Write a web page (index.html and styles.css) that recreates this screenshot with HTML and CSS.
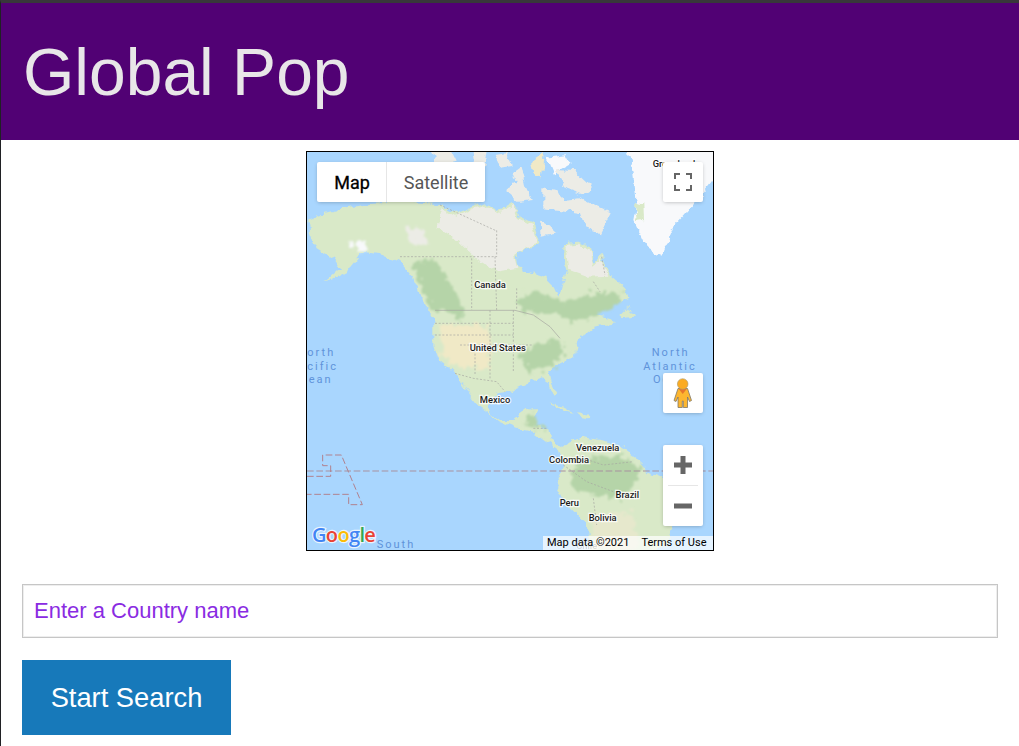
FILE: index.html
```html
<!DOCTYPE html>
<html>

<head>
    <title>Global Pop</title>
    <link rel="stylesheet" href="styles.css">
</head>

<body>
    <header class="banner">
        <h1>Global Pop</h1>
    </header>

    <div class="map">
        <svg class="map-tiles" viewBox="21 21 1218 1194">
            <defs>
                <filter id="coast" filterUnits="userSpaceOnUse" x="-40" y="-40" width="1340" height="1320">
                    <feTurbulence type="fractalNoise" baseFrequency="0.035" numOctaves="3" seed="4" />
                    <feDisplacementMap in="SourceGraphic" scale="26" xChannelSelector="R" yChannelSelector="G" />
                </filter>
                <filter id="patch" filterUnits="userSpaceOnUse" x="-40" y="-40" width="1340" height="1320">
                    <feTurbulence type="fractalNoise" baseFrequency="0.05" numOctaves="3" seed="9" />
                    <feDisplacementMap in="SourceGraphic" scale="46" xChannelSelector="R" yChannelSelector="G" />
                    <feGaussianBlur stdDeviation="3" />
                </filter>
            </defs>

            <rect class="water" x="21" y="21" width="1218" height="1194" />

            <g class="coast">
                <!-- greenland -->
                <path class="ice" d="M980 10 L1000 90 L1010 170 L1000 225 L1040 310 L1085 335 L1120 245 L1180 180 L1250 90 L1250 10 Z" />
                <path class="land" d="M1005 170 L1030 175 L1032 225 L1010 228 Z" />

                <!-- arctic islands -->
                <path class="tundra" d="M395 10 L450 10 L470 50 L430 60 L405 45 Z" />
                <path class="tundra" d="M520 10 L560 10 L552 70 L525 62 Z" />
                <path class="tundra" d="M585 30 L620 25 L638 62 L600 68 Z" />
                <path class="tundra" d="M640 80 L665 62 L678 120 L698 165 L655 170 L612 132 L650 115 Z" />
                <path class="sand" d="M690 55 L735 25 L725 100 L700 95 Z" />
                <path class="ice" d="M740 35 L795 28 L812 58 L762 88 Z" />
                <path class="tundra" d="M730 130 L775 135 L790 165 L840 160 L880 180 L932 205 L900 268 L855 250 L840 205 L780 195 L730 190 Z" />
                <path class="tundra" d="M768 78 L830 82 L880 130 L850 150 L792 130 Z" />
                <path class="tundra" d="M720 225 L745 240 L772 265 L725 275 Z" />
                <path class="tundra" d="M510 110 L555 120 L540 165 L510 150 Z" />

                <!-- north america -->
                <path class="land" d="M25 225 L70 205 L130 190 L200 175 L300 168 L420 178 L470 205 L520 185 L560 175 L600 195 L640 170 L660 215 L700 235 L720 300 L680 310 L650 330 L655 360 L690 385 L740 400 L765 425 L780 460 L790 420 L800 380 L790 340 L790 295 L830 290 L870 310 L880 355 L905 330 L930 390 L975 430 L985 455 L955 470 L905 480 L870 505 L930 520 L945 535 L880 545 L850 570 L830 600 L825 630 L800 645 L745 675 L750 705 L772 745 L760 755 L745 715 L720 700 L680 715 L650 730 L625 740 L590 745 L570 775 L560 785 L570 805 L600 825 L640 825 L690 790 L715 790 L700 845 L745 850 L750 885 L790 910 L810 890 L845 875 L950 895 L1020 945 L1040 980 L1090 1000 L1120 1145 L1100 1195 L1060 1225 L870 1225 L860 1135 L800 1075 L770 1015 L790 965 L780 935 L770 910 L740 890 L700 860 L650 850 L600 830 L560 800 L530 775 L465 685 L420 645 L405 615 L400 600 L400 520 L370 470 L340 400 L300 350 L250 330 L190 320 L150 370 L70 415 L120 370 L100 340 L50 310 L30 260 Z" />
                <path class="tundra" d="M470 212 L520 192 L560 182 L600 200 L640 178 L655 220 L695 240 L712 296 L680 305 L645 330 L655 368 L590 380 L520 335 L480 295 L410 245 L425 188 Z" />
                <path class="tundra" d="M796 300 L830 296 L866 315 L880 362 L905 340 L925 392 L860 395 L805 375 Z" />
                <path class="land" d="M955 510 L985 480 L1005 515 L965 520 Z" />
                <path class="land" d="M465 680 L490 720 L522 770 L495 735 Z" />
                <path class="land" d="M745 775 L790 785 L825 805 L775 790 Z" />
                <path class="land" d="M835 805 L865 810 L860 820 L835 815 Z" />
            </g>

            <!-- soft vegetation patches -->
            <g class="patches">
                <path class="forest" d="M335 355 L400 340 L440 400 L480 470 L490 525 L440 500 L405 495 L380 460 Z" />
                <path class="forest" d="M650 470 L700 435 L790 475 L880 445 L965 440 L950 480 L880 515 L820 535 L780 510 L720 510 L665 495 Z" />
                <path class="forest" d="M655 640 L700 600 L760 580 L800 610 L760 665 L690 680 Z" />
                <path class="forest" d="M670 830 L705 795 L712 835 L740 855 L690 850 Z" />
                <path class="forest" d="M810 985 L860 935 L960 935 L1020 965 L1010 1010 L960 1060 L880 1050 L815 1030 Z" />
                <path class="sand" d="M420 540 L560 540 L570 590 L570 670 L470 665 L425 630 Z" />
                <path class="pale" d="M875 1110 L1000 1100 L1010 1215 L880 1215 Z" />
                <path class="ice" d="M155 292 L188 288 L196 316 L164 322 Z" />
                <path class="tundra" d="M310 245 L360 245 L390 300 L345 300 Z" />
            </g>

            <!-- borders -->
            <path class="border-solid" d="M405 496 L645 496 L700 510 L750 545 L780 580" />
            <path class="border" d="M300 335 L590 335 L590 255 M585 335 L590 495 M420 180 L590 258 M515 340 L515 495 M650 430 L650 495 M880 410 L900 440 M905 335 L915 390" />
            <path class="border" d="M405 535 L640 535 M405 570 L640 570 M480 600 L700 600 M570 496 L570 700 M640 496 L640 680 M525 615 L525 690" />
            <path class="border" d="M465 685 L520 700 L590 710 L615 740 M700 850 L740 850 M850 940 L910 960 L1000 950 M790 960 L860 1010 L940 1040 M880 1060 L890 1140" />

            <!-- equator and kiribati -->
            <path class="dateline" d="M21 978 L1239 978" />
            <path class="zone" d="M21 994 L92 994 L92 962 L68 962 L68 930 L124 930 L187 1079 L146 1079 L146 1048 L21 1048" />

            <!-- place names -->
            <text class="place" x="570" y="428">Canada</text>
            <text class="place" x="593" y="617">United States</text>
            <text class="place" x="585" y="775">Mexico</text>
            <text class="place" x="893" y="917">Venezuela</text>
            <text class="place" x="807" y="953">Colombia</text>
            <text class="place" x="982" y="1058">Brazil</text>
            <text class="place" x="808" y="1082">Peru</text>
            <text class="place" x="908" y="1129">Bolivia</text>
            <text class="place faint" x="860" y="1213">Chile</text>
            <text class="place" x="1122" y="67">Greenland</text>

            <text class="ocean" x="1112" y="632">North</text>
            <text class="ocean" x="1110" y="675">Atlantic</text>
            <text class="ocean" x="1085" y="715">Oc</text>
            <text class="ocean-left" x="22" y="632">orth</text>
            <text class="ocean-left" x="22" y="675">cific</text>
            <text class="ocean-left" x="26" y="715">ean</text>
            <text class="ocean" x="288" y="1209">South</text>

            <text class="google" x="36" y="1190"><tspan class="g-blue">G</tspan><tspan class="g-red">o</tspan><tspan class="g-yellow">o</tspan><tspan class="g-blue">g</tspan><tspan class="g-green">l</tspan><tspan class="g-red">e</tspan></text>
        </svg>

        <div class="map-type">
            <span class="map-type-btn active">Map</span>
            <span class="map-type-btn">Satellite</span>
        </div>

        <div class="map-btn fullscreen">
            <svg viewBox="0 0 40 40" width="40" height="40">
                <path class="ctrl-line" d="M12 17 V12 H17 M23 12 H28 V17 M28 23 V28 H23 M17 28 H12 V23" />
            </svg>
        </div>

        <div class="map-btn pegman">
            <svg viewBox="0 0 40 40" width="40" height="40">
                <path class="peg-body" d="M15 15.500 H24.500 L28.500 27.500 L26.500 28.500 L24.500 24 V34.500 H20.300 V28 H19.300 V34.500 H15 V24 L13 28.500 L11 27.500 Z" />
                <path class="peg-tie" d="M15.800 16 H23.700 L19.700 21 Z" />
                <circle class="peg-head" cx="19.7" cy="11" r="5.300" />
            </svg>
        </div>

        <div class="zoom-box">
            <div class="zoom-btn">
                <svg viewBox="0 0 40 40" width="40" height="40">
                    <path class="ctrl-fill" d="M17.5 11 H22.5 V17.5 H29 V22.5 H22.5 V29 H17.5 V22.5 H11 V17.5 H17.5 Z" />
                </svg>
            </div>
            <div class="zoom-sep"></div>
            <div class="zoom-btn">
                <svg viewBox="0 0 40 40" width="40" height="40">
                    <path class="ctrl-fill" d="M11 17.5 H29 V22.5 H11 Z" />
                </svg>
            </div>
        </div>

        <div class="attribution">
            <span>Map data ©2021</span>
            <span>Terms of Use</span>
        </div>
    </div>

    <form class="search-form">
        <input class="search-input" type="text" placeholder="Enter a Country name">
        <button class="search-button" type="button">Start Search</button>
    </form>
</body>

</html>
```

FILE: styles.css
```css
html {
    background-color: white;
}

body {
    margin: 0;
    border-top: 3px solid #38383a;
    border-left: 1px solid #202124;
    font-family: "Liberation Sans", Arial, sans-serif;
}

.banner {
    background-color: #510174;
    height: 137px;
    padding-left: 22px;
    box-sizing: border-box;
}

.banner h1 {
    margin: 0;
    padding-top: 31px;
    font-size: 66px;
    font-weight: 400;
    line-height: 76px;
    color: #e8e6e8;
}

.map {
    position: relative;
    box-sizing: border-box;
    width: 408px;
    height: 400px;
    margin: 11px auto 33px;
    border: 1px solid black;
    overflow: hidden;
}

.map-tiles {
    display: block;
    width: 406px;
    height: 398px;
}

.coast {
    filter: url(#coast);
}

.patches {
    filter: url(#patch);
}

.water {
    fill: #a9d6fe;
}

.ice {
    fill: #f8f9fb;
}

.land {
    fill: #d9e9c8;
}

.tundra {
    fill: #ecece6;
}

.forest {
    fill: #b5d4a8;
}

.sand {
    fill: #f0e9c6;
}

.pale {
    fill: #e6e8cc;
}

.border,
.border-solid {
    fill: none;
    stroke: #a4a4a0;
    stroke-width: 2;
}

.border {
    stroke-dasharray: 6 5;
}

.dateline,
.zone {
    fill: none;
    stroke: #a8919f;
    stroke-width: 3;
    stroke-dasharray: 20 8;
}

.zone {
    stroke: #b0828f;
}

.place {
    font-family: Roboto, sans-serif;
    font-size: 28px;
    font-weight: 500;
    text-anchor: middle;
    fill: #1c1c1c;
    stroke: rgba(255, 255, 255, 0.8);
    stroke-width: 7px;
    paint-order: stroke;
}

.faint {
    opacity: 0.5;
}

.ocean,
.ocean-left {
    font-family: Roboto, sans-serif;
    font-size: 33px;
    letter-spacing: 6px;
    fill: #5f93da;
}

.ocean {
    text-anchor: middle;
}

.google {
    font-family: "Open Sans", sans-serif;
    font-size: 60px;
    font-weight: 600;
    letter-spacing: -2px;
    stroke: rgba(255, 255, 255, 0.75);
    stroke-width: 7px;
    paint-order: stroke;
}

.g-blue {
    fill: #4285f4;
}

.g-red {
    fill: #ea4335;
}

.g-yellow {
    fill: #fbbc05;
}

.g-green {
    fill: #34a853;
}

.map-type {
    position: absolute;
    top: 10px;
    left: 10px;
    display: flex;
    height: 40px;
    background-color: white;
    border-radius: 2px;
    box-shadow: rgba(0, 0, 0, 0.3) 0 1px 4px -1px;
    font-family: Roboto, sans-serif;
    font-size: 18px;
}

.map-type-btn {
    display: flex;
    align-items: center;
    justify-content: center;
    width: 98px;
    color: #565656;
}

.map-type-btn.active {
    box-sizing: border-box;
    width: 70px;
    padding-left: 1px;
    border-right: 1px solid #e6e6e6;
    color: black;
    font-weight: 400;
    -webkit-text-stroke: 0.3px black;
}

.map-btn,
.zoom-box {
    position: absolute;
    left: 356px;
    width: 40px;
    background-color: white;
    border-radius: 2px;
    box-shadow: rgba(0, 0, 0, 0.3) 0 1px 4px -1px;
}

.map-btn {
    height: 40px;
}

.map-btn svg,
.zoom-btn svg {
    display: block;
}

.fullscreen {
    top: 10px;
}

.pegman {
    top: 221px;
}

.zoom-box {
    top: 293px;
    height: 81px;
}

.zoom-sep {
    height: 1px;
    margin: 0 5px;
    background-color: #e6e6e6;
}

.ctrl-line {
    fill: none;
    stroke: #666;
    stroke-width: 2;
}

.ctrl-fill {
    fill: #666;
}

.peg-body {
    fill: #fdb62f;
    stroke: #7d7768;
    stroke-width: 0.8;
}

.peg-tie {
    fill: #e8762b;
}

.peg-head {
    fill: #fbab22;
    stroke: #a89a70;
    stroke-width: 0.6;
}

.attribution {
    position: absolute;
    right: 0;
    bottom: 0;
    display: flex;
    gap: 12px;
    box-sizing: border-box;
    width: 170px;
    height: 14px;
    padding-left: 4px;
    background-color: rgba(255, 255, 255, 0.7);
    font-family: Roboto, sans-serif;
    font-size: 11px;
    line-height: 14px;
    white-space: nowrap;
    color: black;
}

.search-form {
    padding: 0 21px 11px;
}

.search-input {
    display: block;
    box-sizing: border-box;
    width: 100%;
    height: 54px;
    margin: 0 0 22px;
    padding: 0 11px;
    border: 1px solid #c6c6c6;
    box-shadow: inset 0 0 0 1px #eeeeee;
    outline: none;
    font-family: "Liberation Sans", Arial, sans-serif;
    font-size: 22px;
}

.search-input::placeholder {
    color: #8a2be2;
    opacity: 1;
}

.search-button {
    display: block;
    width: 209px;
    height: 75px;
    padding: 0;
    border: none;
    background-color: #1779ba;
    color: white;
    font-family: "Liberation Sans", Arial, sans-serif;
    font-size: 27.3px;
}
```
